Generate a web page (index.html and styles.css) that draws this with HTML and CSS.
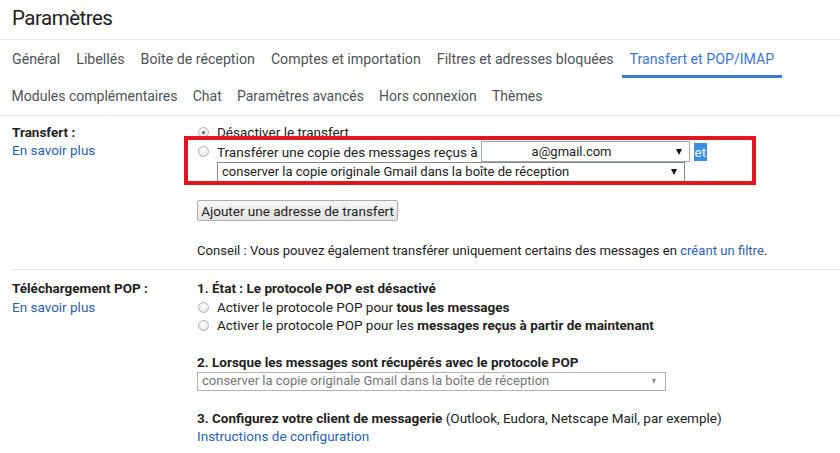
FILE: index.html
```html
<!DOCTYPE html>
<html lang="fr">
<head>
<meta charset="utf-8">
<title>Paramètres</title>
<link rel="stylesheet" href="styles.css">
</head>
<body>
<h1 class="title">Paramètres</h1>
<nav class="tabs">
  <div class="tab-row first">
    <span class="tab">Général</span>
    <span class="tab">Libellés</span>
    <span class="tab">Boîte de réception</span>
    <span class="tab">Comptes et importation</span>
    <span class="tab">Filtres et adresses bloquées</span>
    <span class="tab active">Transfert et POP/IMAP</span>
  </div>
  <div class="tab-row second">
    <span class="tab">Modules complémentaires</span>
    <span class="tab">Chat</span>
    <span class="tab">Paramètres avancés</span>
    <span class="tab">Hors connexion</span>
    <span class="tab">Thèmes</span>
  </div>
</nav>

<section class="setting fwd">
  <div class="label">
    <div class="bold">Transfert :</div>
    <a class="link">En savoir plus</a>
  </div>
  <div class="content">
    <div class="opt first-opt"><span class="radio checked"></span>Désactiver le transfert</div>
    <div class="fwd-opt"><span class="radio"></span><span class="fwd-text">Transférer une copie des messages reçus à</span><div class="select email"><span class="sel-text">a@gmail.com</span><span class="arrow"></span></div><span class="hl">et</span></div>
    <div class="select keep"><span class="sel-text">conserver la copie originale Gmail dans la boîte de réception</span><span class="arrow"></span></div>
    <button class="btn">Ajouter une adresse de transfert</button>
    <p class="tip">Conseil : Vous pouvez également transférer uniquement certains des messages en <a class="link">créant un filtre</a>.</p>
    <div class="redbox"></div>
  </div>
</section>

<section class="setting pop">
  <div class="label">
    <div class="bold">Téléchargement POP :</div>
    <a class="link">En savoir plus</a>
  </div>
  <div class="content">
    <div class="bold">1. État : Le protocole POP est désactivé</div>
    <div class="opt"><span class="radio"></span>Activer le protocole POP pour <b>tous les messages</b></div>
    <div class="opt"><span class="radio"></span>Activer le protocole POP pour les <b>messages reçus à partir de maintenant</b></div>
    <div class="bold step2">2. Lorsque les messages sont récupérés avec le protocole POP</div>
    <div class="select disabled"><span class="sel-text">conserver la copie originale Gmail dans la boîte de réception</span><span class="arrow"></span></div>
    <div class="step3"><b>3. Configurez votre client de messagerie</b> (Outlook, Eudora, Netscape Mail, par exemple)</div>
    <a class="link">Instructions de configuration</a>
  </div>
</section>
</body>
</html>
```

FILE: styles.css
```css
* { box-sizing: border-box; }
html, body { margin: 0; padding: 0; background: #fff; }
body {
  font-family: Roboto, "Liberation Sans", Arial, sans-serif;
  font-size: 13.5px;
  color: #222;
  width: 840px;
  height: 453px;
  overflow: hidden;
}
.title {
  margin: 0;
  height: 40px;
  padding-left: 12px;
  font-size: 20.5px;
  letter-spacing: -0.5px;
  font-weight: 400;
  line-height: 37px;
  color: #222;
  border-bottom: 1px solid #e8e8e8;
}
.tabs {
  border-bottom: 1px solid #e8e8e8;
  padding-left: 4px;
  font-size: 14.2px;
  color: #4f5358;
}
.tab-row { display: flex; }
.tab-row.first { height: 38px; }
.tab-row.second { height: 37px; font-size: 14px; }
.tab {
  padding: 0 8px;
  line-height: 38px;
  white-space: nowrap;
}
.tab-row.second .tab { line-height: 37px; padding: 0 7.6px; }
.tab.active {
  color: #3c78d8;
  box-shadow: inset 0 -3px 0 #3c78d8;
}
.setting {
  display: grid;
  grid-template-columns: 185px 1fr;
  margin-left: 12px;
  line-height: 18.5px;
}
.fwd {
  padding-top: 7px;
  padding-bottom: 9px;
  border-bottom: 1px solid #e8e8e8;
  line-height: 18px;
}
.pop { padding-top: 9px; }
.content { position: relative; display: flex; flex-direction: column; align-items: flex-start; }
.bold, b { font-weight: 700; }
.link { color: #2b5fb4; text-decoration: none; cursor: pointer; }
.opt { white-space: nowrap; }
.first-opt { height: 18px; }
.fwd-opt { display: flex; align-items: center; height: 21px; white-space: nowrap; }
.radio {
  display: inline-block;
  vertical-align: -1px;
  width: 11px;
  height: 11px;
  border-radius: 50%;
  border: 1px solid #b5b5b5;
  background: radial-gradient(circle at 50% 35%, #fdfdfd 0%, #e9e9e9 70%, #dcdcdc 100%);
  margin: 0 8px 0 1px;
  flex: none;
  position: relative;
}
.radio.checked::after {
  content: "";
  position: absolute;
  left: 3px; top: 3px;
  width: 3px; height: 3px;
  border-radius: 50%;
  background: #555;
}
.select {
  display: flex;
  align-items: center;
  justify-content: space-between;
  background: #fff;
  border: 1px solid #a5a5a5;
  white-space: nowrap;
  font-size: 13px;
}
.sel-text { line-height: 16px; }
.arrow {
  width: 0; height: 0;
  border-left: 3px solid transparent;
  border-right: 3px solid transparent;
  border-top: 6px solid #111;
  flex: none;
}
.select.email {
  width: 209px;
  height: 21px;
  margin-left: 3px;
  padding: 0 7px 0 50px;
  border-color: #9ea6b0;
  font-size: 13.5px;
}
.select.email .sel-text { font-size: 13px; }
.hl {
  background: #3b8ee8;
  color: #fff;
  height: 18px;
  line-height: 18px;
  padding: 0 1px;
  margin-left: 4px;
}
.select.keep {
  width: 468px;
  height: 19px;
  margin-left: 20px;
  padding: 0 7px 0 4px;
  border-bottom: none;
  border-color: #8a8a8a;
}
.btn {
  margin-top: 19px;
  height: 21px;
  width: 201px;
  padding: 0;
  font-family: inherit;
  font-size: 13.5px;
  color: #222;
  border: 1px solid #adadad;
  border-radius: 2px;
  background: linear-gradient(#f6f6f6, #e4e4e4);
}
.tip { margin: 21px 0 0; white-space: nowrap; font-size: 13.1px; }
.redbox {
  position: absolute;
  left: -13px;
  top: 13px;
  width: 572px;
  height: 49px;
  border: 4px solid #e3151f;
  pointer-events: none;
}
.step2 { margin-top: 18.5px; }
.select.disabled {
  margin-top: 0;
  width: 469px;
  height: 19px;
  padding: 0 9px 0 4px;
  border-color: #b3b3b3;
  color: #767676;
}
.select.disabled .arrow {
  border-left-width: 2.5px;
  border-right-width: 2.5px;
  border-top: 5px solid #888;
}
.step3 { margin-top: 18px; white-space: nowrap; }
```
